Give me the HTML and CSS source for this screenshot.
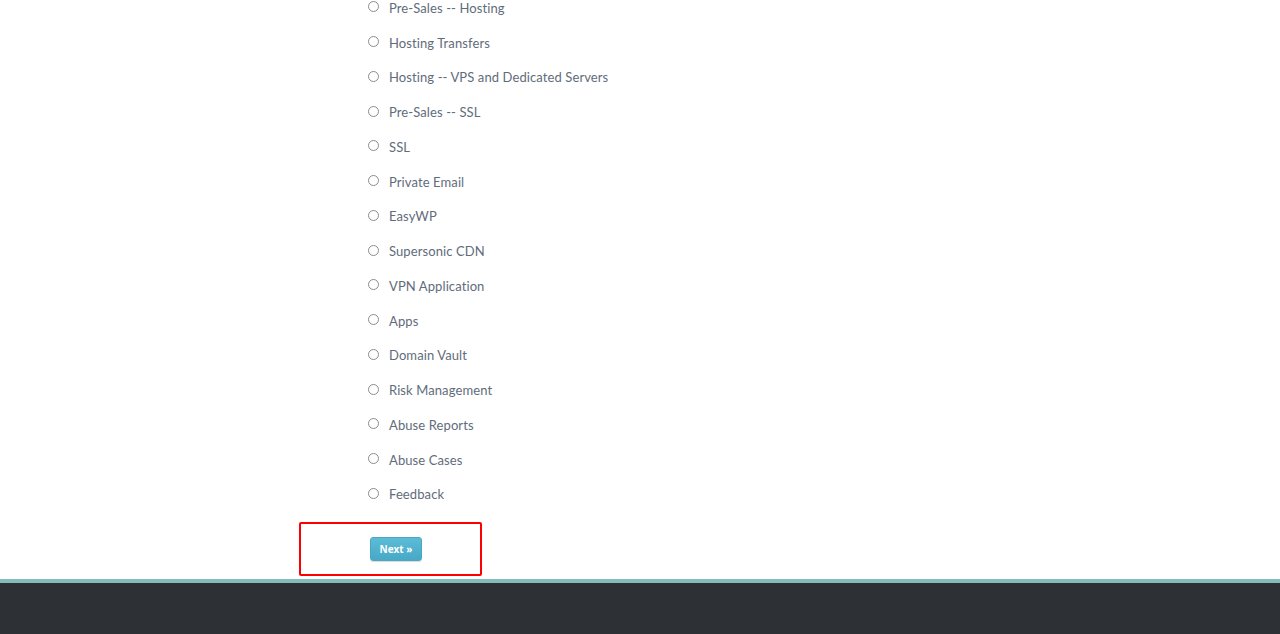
FILE: index.html
```html
<!DOCTYPE html>
<html>
<head>
<meta charset="utf-8">
<link rel="stylesheet" href="styles.css">
</head>
<body>
<div class="page">
  <ul class="options">
    <li><span class="radio"></span>Pre-Sales -- Hosting</li>
    <li><span class="radio"></span>Hosting Transfers</li>
    <li><span class="radio"></span>Hosting -- VPS and Dedicated Servers</li>
    <li><span class="radio"></span>Pre-Sales -- SSL</li>
    <li><span class="radio"></span>SSL</li>
    <li><span class="radio"></span>Private Email</li>
    <li><span class="radio"></span>EasyWP</li>
    <li><span class="radio"></span>Supersonic CDN</li>
    <li><span class="radio"></span>VPN Application</li>
    <li><span class="radio"></span>Apps</li>
    <li><span class="radio"></span>Domain Vault</li>
    <li><span class="radio"></span>Risk Management</li>
    <li><span class="radio"></span>Abuse Reports</li>
    <li><span class="radio"></span>Abuse Cases</li>
    <li><span class="radio"></span>Feedback</li>
  </ul>
  <div class="actions">
    <button class="next">Next »</button>
  </div>
</div>
<footer class="footer"></footer>
</body>
</html>
```
FILE: styles.css
```css
html, body {
  margin: 0;
  padding: 0;
  background: #fff;
  overflow: hidden;
  height: 634px;
}
body {
  font-family: Lato, "Open Sans", sans-serif;
  color: #5f6c7b;
}
.page {
  display: flow-root;
  height: 579px;
}
.options {
  list-style: none;
  margin: -9.4px 0 0 368px;
  padding: 0;
}
.options li {
  height: 34.75px;
  display: flex;
  align-items: center;
  font-size: 13px;
  letter-spacing: 0.1px;
}
.radio {
  width: 9px;
  height: 9px;
  border: 1px solid #8c8c8c;
  border-radius: 50%;
  margin-right: 10px;
  margin-top: -2px;
  flex: none;
}
.actions {
  margin: 10px 0 0 299px;
  border: 2px solid #ff0000;
  border-radius: 2px;
  padding: 13px 0 0 69px;
  box-sizing: border-box;
  height: 54px;
  width: 183px;
}
.next {
  display: block;
  width: 52px;
  height: 24px;
  border: 1px solid #4aa6c1;
  border-radius: 3px;
  background: linear-gradient(#5bbcd6, #47a9c6);
  color: #fff;
  font-family: "Open Sans", sans-serif;
  font-weight: bold;
  font-size: 10px;
  padding: 0;
  box-shadow: 0 1px 1px rgba(0,0,0,0.15);
}
.footer {
  border-top: 4px solid #84bcbb;
  background: #2d3034;
  height: 51px;
}
```
